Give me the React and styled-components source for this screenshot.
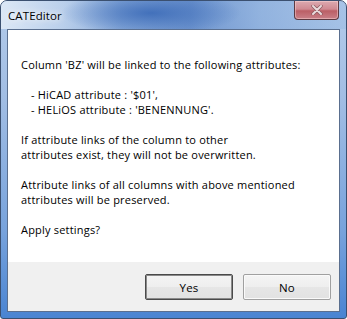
import styled, { createGlobalStyle } from 'styled-components'

const GlobalStyle = createGlobalStyle`
  html, body {
    margin: 0;
    padding: 0;
    background: #ffffff;
  }
  body {
    font-family: "Open Sans", "Noto Sans", sans-serif;
  }
`

/* Fenêtre Aero complète */
const Window = styled.div`
  box-sizing: border-box;
  width: 347px;
  height: 319px;
  display: flex;
  flex-direction: column;
  border: 1px solid #3b5070;
  border-radius: 7px 7px 3px 3px;
  background: linear-gradient(180deg, #b3cbea 0%, #a2bee4 30%, #78a3dc 72%, #4a84d2 100%);
  overflow: hidden;
`

const TitleBar = styled.div`
  height: 28px;
  display: flex;
  align-items: flex-start;
  padding-left: 7px;
  background:
    radial-gradient(ellipse 90px 22px at 150px 12px, rgba(56, 104, 182, 0.85), rgba(56, 104, 182, 0) 100%),
    linear-gradient(90deg,
      rgba(222, 233, 246, 0.95) 0%,
      rgba(190, 210, 236, 0.7) 18%,
      rgba(110, 150, 208, 0.6) 35%,
      rgba(84, 128, 196, 0.7) 55%,
      rgba(120, 160, 214, 0.55) 75%,
      rgba(150, 184, 226, 0.4) 100%);
`

const Title = styled.span`
  margin-top: 7px;
  font-size: 11.5px;
  line-height: 16px;
  letter-spacing: 0.1px;
  color: #000000;
  text-shadow: 0 0 6px #ffffff, 0 0 10px rgba(255, 255, 255, 0.9);
`

const CloseButton = styled.div`
  margin-left: auto;
  margin-right: 7px;
  width: 45px;
  height: 19px;
  box-sizing: border-box;
  border: 1px solid #5c3a42;
  border-top: none;
  border-radius: 0 0 4px 4px;
  background: linear-gradient(180deg, #dcaab0 0%, #cf8a92 45%, #bb5f66 55%, #c98088 100%);
  box-shadow: inset 0 0 0 1px rgba(255, 220, 220, 0.45);
  display: flex;
  align-items: center;
  justify-content: center;
`

const Client = styled.div`
  flex: 1;
  margin: 0 6px 6px 6px;
  border: 1px solid #5a6f8f;
  display: flex;
  flex-direction: column;
  background: #f0f0f0;
`

const Content = styled.div`
  height: 232px;
  box-sizing: border-box;
  background: #ffffff;
  padding: 27px 0 0 13px;
  font-size: 11px;
  line-height: 15px;
  letter-spacing: 0.2px;
  color: #000000;
`

const Paragraph = styled.p`
  margin: 0 0 15px 0;
`

const Indented = styled.span`
  display: block;
  padding-left: ${(p) => p.$indent || 10}px;
`

const ButtonRow = styled.div`
  flex: 1;
  display: flex;
  justify-content: flex-end;
  align-items: flex-start;
  gap: 10px;
  padding: 12px 8px 0 0;
`

const Button = styled.button`
  width: 88px;
  height: 26px;
  box-sizing: border-box;
  padding: 0;
  font-family: "Open Sans", "Noto Sans", sans-serif;
  font-size: 11.5px;
  letter-spacing: 0.2px;
  color: #000000;
  background: linear-gradient(180deg, #f4f4f4 0%, #eeeeee 50%, #e6e6e6 51%, #e2e2e2 100%);
  border: 1px solid ${(p) => (p.$default ? '#4a4a4a' : '#a0a0a0')};
  border-radius: 2px;
  box-shadow: ${(p) => (p.$default ? 'inset 0 0 0 1px #8a8a8a' : 'inset 0 0 0 1px #fafafa')};
`

function CloseGlyph() {
  return (
    <svg width="12" height="10" viewBox="0 0 12 10">
      <path d="M2 1 L10 9 M10 1 L2 9" stroke="#8a5a60" strokeWidth="3.4" strokeLinecap="round" />
      <path d="M2 1 L10 9 M10 1 L2 9" stroke="#eadadc" strokeWidth="2" strokeLinecap="round" />
    </svg>
  )
}

export default function App() {
  return (
    <>
      <GlobalStyle />
      <Window>
        <TitleBar>
          <Title>CATEditor</Title>
          <CloseButton>
            <CloseGlyph />
          </CloseButton>
        </TitleBar>
        <Client>
          <Content>
            <Paragraph>Column 'BZ' will be linked to the following attributes:</Paragraph>
            <Paragraph>
              <Indented>- HiCAD attribute : '$01',</Indented>
              <Indented>- HELiOS attribute : 'BENENNUNG'.</Indented>
            </Paragraph>
            <Paragraph>
              If attribute links of the column to other
              <br />
              attributes exist, they will not be overwritten.
            </Paragraph>
            <Paragraph>
              Attribute links of all columns with above mentioned
              <br />
              attributes will be preserved.
            </Paragraph>
            <Paragraph>Apply settings?</Paragraph>
          </Content>
          <ButtonRow>
            <Button $default>Yes</Button>
            <Button>No</Button>
          </ButtonRow>
        </Client>
      </Window>
    </>
  )
}
